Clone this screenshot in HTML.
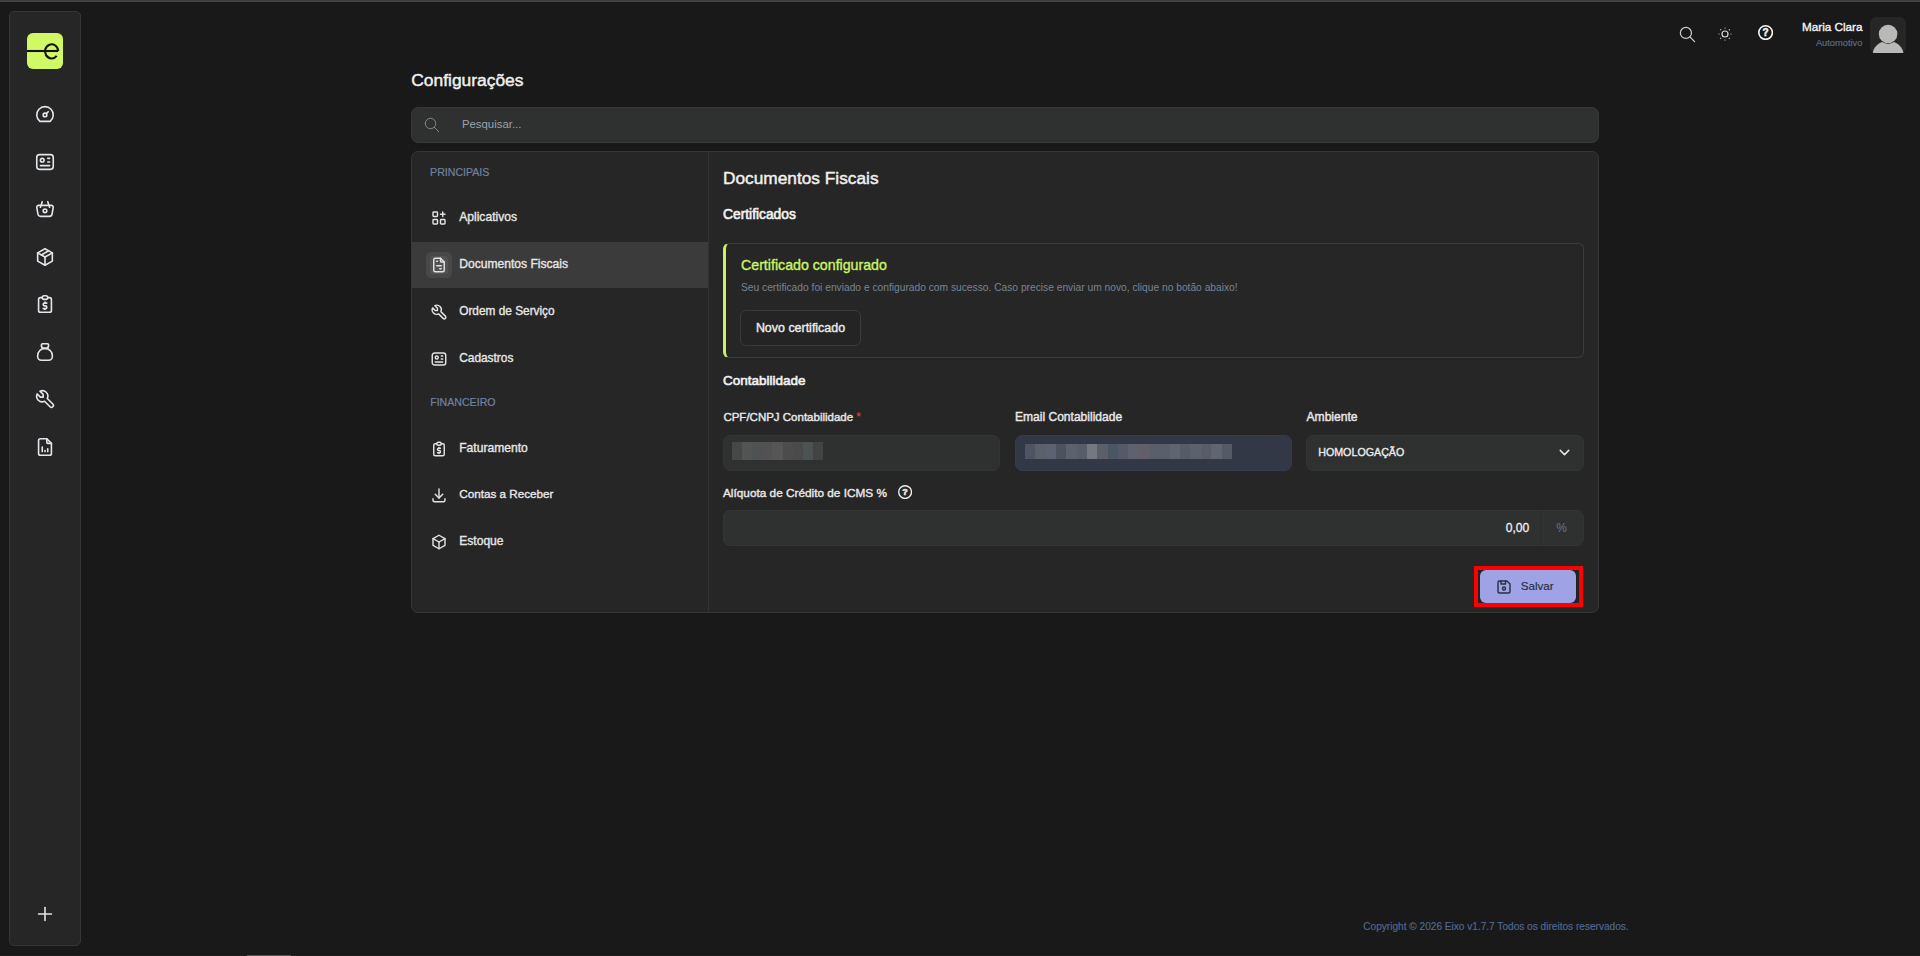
<!DOCTYPE html>
<html><head><meta charset="utf-8"><title>Configurações</title>
<style>
*{box-sizing:border-box;margin:0;padding:0}
html,body{width:1920px;height:956px;overflow:hidden;background:#191919;font-family:"Liberation Sans",sans-serif}
.t{position:absolute;white-space:nowrap}
.ic{position:absolute;display:block}
.r{position:absolute}
</style></head><body>
<div class="r" style="left:0;top:0;width:1920px;height:1px;background:#3d3d3d"></div><div class="r" style="left:0;top:1px;width:1920px;height:1px;background:#464746"></div><div class="r" style="left:0;top:2px;width:1920px;height:1px;background:#161616"></div><div class="r" style="left:0;top:955px;width:1920px;height:1px;background:#1f2022"></div><div class="r" style="left:247px;top:955px;width:44px;height:1px;background:#555"></div><div class="r" style="left:9px;top:11px;width:72px;height:935px;background:#262626;border:1px solid #363636;border-radius:5px"></div><div class="r" style="left:27px;top:33px;width:36px;height:36px;background:#d1f865;border-radius:6px"></div><svg class="ic" style="left:27px;top:33px;width:36px;height:36px" viewBox="0 0 36 36" fill="none" stroke="#141414" stroke-width="2.1"><path d="M0 18H31.2"/><path d="M29.7 22.9A6.6 7.1 0 1 1 31.2 18"/></svg><svg class="ic" style="left:34.00px;top:103.30px;width:22px;height:22px;" viewBox="0 0 24 24" fill="none" stroke="#e3e6ea" stroke-width="1.75" stroke-linecap="round" stroke-linejoin="round"><path d="M12 13m-2 0a2 2 0 1 0 4 0a2 2 0 1 0 -4 0"/><path d="M13.45 11.55l2.05 -2.05"/><path d="M6.4 20a9 9 0 1 1 11.2 0z"/></svg>
<svg class="ic" style="left:34.00px;top:150.80px;width:22px;height:22px;" viewBox="0 0 24 24" fill="none" stroke="#e3e6ea" stroke-width="1.75" stroke-linecap="round" stroke-linejoin="round"><path d="M3 7a3 3 0 0 1 3 -3h12a3 3 0 0 1 3 3v10a3 3 0 0 1 -3 3h-12a3 3 0 0 1 -3 -3z"/><path d="M9 10m-2 0a2 2 0 1 0 4 0a2 2 0 1 0 -4 0"/><path d="M15 8l2 0"/><path d="M15 12l2 0"/><path d="M7 16l10 0"/></svg>
<svg class="ic" style="left:34.00px;top:198.30px;width:22px;height:22px;" viewBox="0 0 24 24" fill="none" stroke="#e3e6ea" stroke-width="1.75" stroke-linecap="round" stroke-linejoin="round"><path d="M10 14a2 2 0 1 0 4 0a2 2 0 0 0 -4 0"/><path d="M5.001 8h13.999a2 2 0 0 1 1.977 2.304l-1.255 7.152a3 3 0 0 1 -2.966 2.544h-9.512a3 3 0 0 1 -2.965 -2.544l-1.255 -7.152a2 2 0 0 1 1.977 -2.304z"/><path d="M17 10l-2 -6"/><path d="M7 10l2 -6"/></svg>
<svg class="ic" style="left:34.00px;top:245.80px;width:22px;height:22px;" viewBox="0 0 24 24" fill="none" stroke="#e3e6ea" stroke-width="1.75" stroke-linecap="round" stroke-linejoin="round"><path d="M12 3l8 4.5l0 9l-8 4.5l-8 -4.5l0 -9l8 -4.5"/><path d="M12 12l8 -4.5"/><path d="M12 12l0 9"/><path d="M12 12l-8 -4.5"/><path d="M16 5.25l-8 4.5"/></svg>
<svg class="ic" style="left:34.00px;top:293.30px;width:22px;height:22px;" viewBox="0 0 24 24" fill="none" stroke="#e3e6ea" stroke-width="1.75" stroke-linecap="round" stroke-linejoin="round"><path d="M9 5h-2a2 2 0 0 0 -2 2v12a2 2 0 0 0 2 2h10a2 2 0 0 0 2 -2v-12a2 2 0 0 0 -2 -2h-2"/><path d="M9 5a2 2 0 0 1 2 -2h2a2 2 0 0 1 2 2a2 2 0 0 1 -2 2h-2a2 2 0 0 1 -2 -2z"/><path d="M14 11h-2.5a1.5 1.5 0 0 0 0 3h1a1.5 1.5 0 0 1 0 3h-2.5"/><path d="M12 17v1m0 -8v1"/></svg>
<svg class="ic" style="left:34.00px;top:340.80px;width:22px;height:22px;" viewBox="0 0 24 24" fill="none" stroke="#e3e6ea" stroke-width="1.75" stroke-linecap="round" stroke-linejoin="round"><path d="M9.5 3h5a1.5 1.5 0 0 1 1.5 1.5a3.5 3.5 0 0 1 -3.5 3.5h-1a3.5 3.5 0 0 1 -3.5 -3.5a1.5 1.5 0 0 1 1.5 -1.5z"/><path d="M4 17v-1a8 8 0 1 1 16 0v1a4 4 0 0 1 -4 4h-8a4 4 0 0 1 -4 -4z"/></svg>
<svg class="ic" style="left:34.00px;top:388.30px;width:22px;height:22px;" viewBox="0 0 24 24" fill="none" stroke="#e3e6ea" stroke-width="1.75" stroke-linecap="round" stroke-linejoin="round"><path d="M7 10h3v-3l-3.5 -3.5a6 6 0 0 1 8 8l6 6a2 2 0 0 1 -3 3l-6 -6a6 6 0 0 1 -8 -8l3.5 3.5"/></svg>
<svg class="ic" style="left:34.00px;top:435.80px;width:22px;height:22px;" viewBox="0 0 24 24" fill="none" stroke="#e3e6ea" stroke-width="1.75" stroke-linecap="round" stroke-linejoin="round"><path d="M14 3v4a1 1 0 0 0 1 1h4"/><path d="M17 21h-10a2 2 0 0 1 -2 -2v-14a2 2 0 0 1 2 -2h7l5 5v11a2 2 0 0 1 -2 2z"/><path d="M9 17l0 -5"/><path d="M12 17l0 -1"/><path d="M15 17l0 -3"/></svg>
<svg class="ic" style="left:34.00px;top:902.70px;width:22px;height:22px;" viewBox="0 0 24 24" fill="none" stroke="#e3e6ea" stroke-width="1.75" stroke-linecap="round" stroke-linejoin="round"><path d="M12 5l0 14"/><path d="M5 12l14 0"/></svg>
<svg class="ic" style="left:1677.50px;top:24.60px;width:19px;height:19px;" viewBox="0 0 24 24" fill="none" stroke="#d0d0d0" stroke-width="1.5" stroke-linecap="round" stroke-linejoin="round"><path d="M10 10m-7 0a7 7 0 1 0 14 0a7 7 0 1 0 -14 0"/><path d="M21 21l-6 -6"/></svg>
<svg class="ic" style="left:1716.00px;top:24.70px;width:18px;height:18px;" viewBox="0 0 24 24" fill="none" stroke="#d8d8d8" stroke-width="1.6" stroke-linecap="round" stroke-linejoin="round"><path d="M12 12m-4 0a4 4 0 1 0 8 0a4 4 0 1 0 -8 0"/><path d="M4 12h.01"/><path d="M12 4v.01"/><path d="M20 12h.01"/><path d="M12 20v.01"/><path d="M6.31 6.31l-.01 -.01"/><path d="M17.71 6.31l-.01 .01"/><path d="M17.7 17.7l.01 .01"/><path d="M6.3 17.7l.01 -.01"/></svg>
<svg class="ic" style="left:1758.00px;top:25.20px;width:15.2px;height:15.2px" viewBox="0 0 15.2 15.2"><circle cx="7.6" cy="7.6" r="6.80" fill="none" stroke="#f4f4f4" stroke-width="1.6"/><text x="7.6" y="11.20" text-anchor="middle" font-family="Liberation Sans" font-weight="bold" font-size="10" fill="#f4f4f4" stroke="#f4f4f4" stroke-width="0.5">?</text></svg>
<div class="t" style="right:57.60px;top:21.00px;font-size:11.7px;line-height:11.7px;color:#f4f4f4;font-weight:400;-webkit-text-stroke:0.35px #f4f4f4;">Maria Clara</div>
<div class="t" style="right:57.60px;top:39.00px;font-size:9.3px;line-height:9.3px;color:#5f6d88;font-weight:400;-webkit-text-stroke:0.15px #5f6d88;">Automotivo</div>
<div class="r" style="left:1870px;top:17px;width:36px;height:36px;background:#262626;border-radius:6px"></div><svg class="ic" style="left:1870px;top:17px;width:36px;height:36px" viewBox="0 0 36 36"><path fill="#b9b9b7" d="M2.8 35.2C4.5 28.5 10.5 24 18 24C25.5 24 31.5 28.5 33.4 35.2Q33.6 36 32.5 36H3.7Q2.6 36 2.8 35.2Z"/><circle cx="18.1" cy="17" r="9.9" fill="#262626"/><circle cx="18.1" cy="17" r="9.3" fill="#b9b9b7"/></svg><div class="t" style="left:411.30px;top:72.00px;font-size:17.4px;line-height:17.4px;color:#f0f0f0;font-weight:400;-webkit-text-stroke:0.45px #f0f0f0;">Configurações</div>
<div class="r" style="left:411px;top:107px;width:1188px;height:36px;background:#2f3030;border:1px solid #363737;border-radius:7px"></div><svg class="ic" style="left:423.40px;top:116.35px;width:18px;height:18px;" viewBox="0 0 24 24" fill="none" stroke="#7f8792" stroke-width="1.33" stroke-linecap="round" stroke-linejoin="round"><path d="M10 10m-7 0a7 7 0 1 0 14 0a7 7 0 1 0 -14 0"/><path d="M21 21l-6 -6"/></svg>
<div class="t" style="left:461.90px;top:119.00px;font-size:11.4px;line-height:11.4px;color:#9aa3ae;font-weight:400;">Pesquisar...</div>
<div class="r" style="left:411px;top:151px;width:1188px;height:462px;background:#262626;border:1px solid #363636;border-radius:7px;overflow:hidden"><div class="r" style="left:0;top:90px;width:296px;height:46px;background:#3b3b3b"></div><div class="r" style="left:296px;top:0;width:1px;height:462px;background:#333"></div></div><div class="t" style="left:430.10px;top:167.00px;font-size:10.6px;line-height:10.6px;color:#7082a2;font-weight:400;-webkit-text-stroke:0.2px #7082a2;">PRINCIPAIS</div>
<div class="t" style="left:430.20px;top:397.00px;font-size:10.6px;line-height:10.6px;color:#7082a2;font-weight:400;-webkit-text-stroke:0.2px #7082a2;">FINANCEIRO</div>
<div class="r" style="left:426px;top:252px;width:26px;height:26px;background:#484848;border-radius:5px"></div><div class="r" style="left:430px;top:256px;width:18px;height:18px;background:#525252;border-radius:3px"></div><svg class="ic" style="left:430.00px;top:209.00px;width:18px;height:18px;" viewBox="0 0 24 24" fill="none" stroke="#e3e3e3" stroke-width="1.9" stroke-linecap="round" stroke-linejoin="round"><path d="M4 5a1 1 0 0 1 1 -1h4a1 1 0 0 1 1 1v4a1 1 0 0 1 -1 1h-4a1 1 0 0 1 -1 -1z"/><path d="M4 15a1 1 0 0 1 1 -1h4a1 1 0 0 1 1 1v4a1 1 0 0 1 -1 1h-4a1 1 0 0 1 -1 -1z"/><path d="M14 15a1 1 0 0 1 1 -1h4a1 1 0 0 1 1 1v4a1 1 0 0 1 -1 1h-4a1 1 0 0 1 -1 -1z"/><path d="M14 7l6 0"/><path d="M17 4l0 6"/></svg>
<div class="t" style="left:459.20px;top:211.00px;font-size:12.1px;line-height:12.1px;color:#e6e6e6;font-weight:400;-webkit-text-stroke:0.35px #e6e6e6;">Aplicativos</div>
<svg class="ic" style="left:430.00px;top:256.00px;width:18px;height:18px;" viewBox="0 0 24 24" fill="none" stroke="#e3e3e3" stroke-width="1.9" stroke-linecap="round" stroke-linejoin="round"><path d="M14 3v4a1 1 0 0 0 1 1h4"/><path d="M17 21h-10a2 2 0 0 1 -2 -2v-14a2 2 0 0 1 2 -2h7l5 5v11a2 2 0 0 1 -2 2z"/><path d="M9 7l1 0"/><path d="M9 13l6 0"/><path d="M13 17l2 0"/></svg>
<div class="t" style="left:459.20px;top:258.00px;font-size:12.1px;line-height:12.1px;color:#e6e6e6;font-weight:400;-webkit-text-stroke:0.35px #e6e6e6;">Documentos Fiscais</div>
<svg class="ic" style="left:430.00px;top:303.00px;width:18px;height:18px;" viewBox="0 0 24 24" fill="none" stroke="#e3e3e3" stroke-width="1.9" stroke-linecap="round" stroke-linejoin="round"><path d="M7 10h3v-3l-3.5 -3.5a6 6 0 0 1 8 8l6 6a2 2 0 0 1 -3 3l-6 -6a6 6 0 0 1 -8 -8l3.5 3.5"/></svg>
<div class="t" style="left:459.20px;top:306.00px;font-size:11.85px;line-height:11.85px;color:#e6e6e6;font-weight:400;-webkit-text-stroke:0.35px #e6e6e6;">Ordem de Serviço</div>
<svg class="ic" style="left:430.00px;top:350.00px;width:18px;height:18px;" viewBox="0 0 24 24" fill="none" stroke="#e3e3e3" stroke-width="1.9" stroke-linecap="round" stroke-linejoin="round"><path d="M3 7a3 3 0 0 1 3 -3h12a3 3 0 0 1 3 3v10a3 3 0 0 1 -3 3h-12a3 3 0 0 1 -3 -3z"/><path d="M9 10m-2 0a2 2 0 1 0 4 0a2 2 0 1 0 -4 0"/><path d="M15 8l2 0"/><path d="M15 12l2 0"/><path d="M7 16l10 0"/></svg>
<div class="t" style="left:459.20px;top:353.00px;font-size:11.9px;line-height:11.9px;color:#e6e6e6;font-weight:400;-webkit-text-stroke:0.35px #e6e6e6;">Cadastros</div>
<svg class="ic" style="left:430.00px;top:440.00px;width:18px;height:18px;" viewBox="0 0 24 24" fill="none" stroke="#e3e3e3" stroke-width="1.9" stroke-linecap="round" stroke-linejoin="round"><path d="M9 5h-2a2 2 0 0 0 -2 2v12a2 2 0 0 0 2 2h10a2 2 0 0 0 2 -2v-12a2 2 0 0 0 -2 -2h-2"/><path d="M9 5a2 2 0 0 1 2 -2h2a2 2 0 0 1 2 2a2 2 0 0 1 -2 2h-2a2 2 0 0 1 -2 -2z"/><path d="M14 11h-2.5a1.5 1.5 0 0 0 0 3h1a1.5 1.5 0 0 1 0 3h-2.5"/><path d="M12 17v1m0 -8v1"/></svg>
<div class="t" style="left:459.20px;top:442.00px;font-size:12.1px;line-height:12.1px;color:#e6e6e6;font-weight:400;-webkit-text-stroke:0.35px #e6e6e6;">Faturamento</div>
<svg class="ic" style="left:430.00px;top:486.00px;width:18px;height:18px;" viewBox="0 0 24 24" fill="none" stroke="#e3e3e3" stroke-width="1.9" stroke-linecap="round" stroke-linejoin="round"><path d="M4 17v2a2 2 0 0 0 2 2h12a2 2 0 0 0 2 -2v-2"/><path d="M7 11l5 5l5 -5"/><path d="M12 4l0 12"/></svg>
<div class="t" style="left:459.20px;top:488.00px;font-size:11.7px;line-height:11.7px;color:#e6e6e6;font-weight:400;-webkit-text-stroke:0.35px #e6e6e6;">Contas a Receber</div>
<svg class="ic" style="left:430.00px;top:532.70px;width:18px;height:18px;" viewBox="0 0 24 24" fill="none" stroke="#e3e3e3" stroke-width="1.9" stroke-linecap="round" stroke-linejoin="round"><path d="M12 3l8 4.5l0 9l-8 4.5l-8 -4.5l0 -9l8 -4.5"/><path d="M12 12l8 -4.5"/><path d="M12 12l0 9"/><path d="M12 12l-8 -4.5"/></svg>
<div class="t" style="left:459.20px;top:535.00px;font-size:12.1px;line-height:12.1px;color:#e6e6e6;font-weight:400;-webkit-text-stroke:0.35px #e6e6e6;">Estoque</div>
<div class="t" style="left:723.00px;top:170.00px;font-size:17.3px;line-height:17.3px;color:#f0f0f0;font-weight:400;-webkit-text-stroke:0.45px #f0f0f0;">Documentos Fiscais</div>
<div class="t" style="left:723.00px;top:208.00px;font-size:13.8px;line-height:13.8px;color:#f2f2f2;font-weight:400;-webkit-text-stroke:0.6px #f2f2f2;">Certificados</div>
<div class="r" style="left:723px;top:243px;width:861px;height:115px;border:1px solid #3c3c3c;border-left:3px solid #c9f263;border-radius:6px"></div><div class="t" style="left:741.00px;top:258.00px;font-size:14.2px;line-height:14.2px;color:#c9f566;font-weight:400;-webkit-text-stroke:0.35px #c9f566;">Certificado configurado</div>
<div class="t" style="left:741.00px;top:283.00px;font-size:10.24px;line-height:10.24px;color:#7a8394;font-weight:400;">Seu certificado foi enviado e configurado com sucesso. Caso precise enviar um novo, clique no botão abaixo!</div>
<div class="r" style="left:740px;top:310px;width:121px;height:36px;border:1px solid #3a3a3a;border-radius:6px;background:#242424"></div><div class="t" style="left:755.90px;top:322.00px;font-size:12.45px;line-height:12.45px;color:#ececec;font-weight:400;-webkit-text-stroke:0.4px #ececec;">Novo certificado</div>
<div class="t" style="left:723.00px;top:374.00px;font-size:13.5px;line-height:13.5px;color:#f2f2f2;font-weight:400;-webkit-text-stroke:0.6px #f2f2f2;">Contabilidade</div>
<div class="t" style="left:723.40px;top:412.00px;font-size:11.5px;line-height:11.5px;color:#e8e8e8;font-weight:400;-webkit-text-stroke:0.4px #e8e8e8;">CPF/CNPJ Contabilidade</div>
<div class="t" style="left:856.20px;top:411.00px;font-size:12px;line-height:12px;color:#e5484d;font-weight:400;">*</div>
<div class="t" style="left:1015.00px;top:411.00px;font-size:12.05px;line-height:12.05px;color:#e8e8e8;font-weight:400;-webkit-text-stroke:0.4px #e8e8e8;">Email Contabilidade</div>
<div class="t" style="left:1306.50px;top:411.00px;font-size:12.1px;line-height:12.1px;color:#e8e8e8;font-weight:400;-webkit-text-stroke:0.4px #e8e8e8;">Ambiente</div>
<div class="r" style="left:723px;top:435px;width:277px;height:36px;background:#2f3030;border:1px solid #333434;border-radius:7px"></div><div class="r" style="left:1015px;top:435px;width:277px;height:36px;background:#323846;border:1px solid #353b48;border-radius:7px"></div><div class="r" style="left:1306px;top:435px;width:278px;height:36px;background:#2f3030;border:1px solid #333434;border-radius:7px"></div><div class="r" style="left:732.2px;top:442.3px;width:9.8px;height:17.5px;background:#464747"></div><div class="r" style="left:742.0px;top:442.3px;width:9.8px;height:17.5px;background:#525353"></div><div class="r" style="left:751.8px;top:442.3px;width:10.1px;height:17.5px;background:#4f5252"></div><div class="r" style="left:761.9px;top:442.3px;width:10.0px;height:17.5px;background:#525252"></div><div class="r" style="left:771.9px;top:442.3px;width:11.1px;height:17.5px;background:#565656"></div><div class="r" style="left:783.0px;top:442.3px;width:10.0px;height:17.5px;background:#4c4c4d"></div><div class="r" style="left:793.0px;top:442.3px;width:10.0px;height:17.5px;background:#4a4a4a"></div><div class="r" style="left:803.0px;top:442.3px;width:10.0px;height:17.5px;background:#4d5252"></div><div class="r" style="left:813.0px;top:442.3px;width:10.0px;height:17.5px;background:#434343"></div><div class="r" style="left:1024.9px;top:443.9px;width:10.5px;height:15.1px;background:#4e5562"></div><div class="r" style="left:1035.2px;top:443.9px;width:10.5px;height:15.1px;background:#5a616b"></div><div class="r" style="left:1045.6px;top:443.9px;width:10.5px;height:15.1px;background:#5c6370"></div><div class="r" style="left:1055.9px;top:443.9px;width:10.5px;height:15.1px;background:#4b535e"></div><div class="r" style="left:1066.3px;top:443.9px;width:10.5px;height:15.1px;background:#5b626e"></div><div class="r" style="left:1076.6px;top:443.9px;width:10.5px;height:15.1px;background:#575d69"></div><div class="r" style="left:1087.0px;top:443.9px;width:10.5px;height:15.1px;background:#737883"></div><div class="r" style="left:1097.3px;top:443.9px;width:10.5px;height:15.1px;background:#5a5f6a"></div><div class="r" style="left:1107.7px;top:443.9px;width:10.5px;height:15.1px;background:#4a5664"></div><div class="r" style="left:1118.0px;top:443.9px;width:10.5px;height:15.1px;background:#545a67"></div><div class="r" style="left:1128.3px;top:443.9px;width:10.5px;height:15.1px;background:#5d626e"></div><div class="r" style="left:1138.7px;top:443.9px;width:10.5px;height:15.1px;background:#625f6a"></div><div class="r" style="left:1149.0px;top:443.9px;width:10.5px;height:15.1px;background:#5a606b"></div><div class="r" style="left:1159.4px;top:443.9px;width:10.5px;height:15.1px;background:#595f6b"></div><div class="r" style="left:1169.7px;top:443.9px;width:10.5px;height:15.1px;background:#5e6470"></div><div class="r" style="left:1180.1px;top:443.9px;width:10.5px;height:15.1px;background:#555b67"></div><div class="r" style="left:1190.4px;top:443.9px;width:10.5px;height:15.1px;background:#5c626d"></div><div class="r" style="left:1200.8px;top:443.9px;width:10.5px;height:15.1px;background:#575c68"></div><div class="r" style="left:1211.1px;top:443.9px;width:10.5px;height:15.1px;background:#5f6571"></div><div class="r" style="left:1221.5px;top:443.9px;width:10.5px;height:15.1px;background:#545a66"></div><div class="t" style="left:1318.20px;top:447.00px;font-size:10.7px;line-height:10.7px;color:#ececec;font-weight:400;-webkit-text-stroke:0.35px #ececec;">HOMOLOGAÇÃO</div>
<svg class="ic" style="left:1555.50px;top:444.00px;width:17px;height:17px;" viewBox="0 0 24 24" fill="none" stroke="#e6e6e6" stroke-width="2.0" stroke-linecap="round" stroke-linejoin="round"><path d="M6 9l6 6l6 -6"/></svg>
<div class="t" style="left:723.00px;top:488.00px;font-size:11.8px;line-height:11.8px;color:#e8e8e8;font-weight:400;-webkit-text-stroke:0.4px #e8e8e8;">Alíquota de Crédito de ICMS %</div>
<svg class="ic" style="left:897.50px;top:484.80px;width:14.2px;height:14.2px" viewBox="0 0 14.2 14.2"><circle cx="7.1" cy="7.1" r="6.40" fill="none" stroke="#ececec" stroke-width="1.4"/><text x="7.1" y="10.34" text-anchor="middle" font-family="Liberation Sans" font-weight="bold" font-size="9" fill="#ececec" stroke="#ececec" stroke-width="0.5">?</text></svg>
<div class="r" style="left:723px;top:510px;width:861px;height:36px;background:#2f3030;border:1px solid #333434;border-radius:7px"></div><div class="r" style="left:1540px;top:511px;width:1px;height:34px;background:#2a2b2b"></div><div class="t" style="right:390.80px;top:522.00px;font-size:12.1px;line-height:12.1px;color:#ededed;font-weight:400;-webkit-text-stroke:0.3px #ededed;">0,00</div>
<div class="t" style="left:1556.20px;top:522.00px;font-size:12px;line-height:12px;color:#6a7488;font-weight:400;">%</div>
<div class="r" style="left:1474px;top:566px;width:109px;height:41px;border:4px solid #ff0000;background:#1e2424"></div><div class="r" style="left:1480px;top:570px;width:96px;height:33px;background:#a0a2e6;border-radius:6px"></div><svg class="ic" style="left:1494.90px;top:577.60px;width:18px;height:18px;" viewBox="0 0 24 24" fill="none" stroke="#293040" stroke-width="1.9" stroke-linecap="round" stroke-linejoin="round"><path d="M6 4h10l4 4v10a2 2 0 0 1 -2 2h-12a2 2 0 0 1 -2 -2v-12a2 2 0 0 1 2 -2"/><path d="M12 14m-2 0a2 2 0 1 0 4 0a2 2 0 1 0 -4 0"/><path d="M14 4l0 4l-6 0l0 -4"/></svg>
<div class="t" style="left:1520.80px;top:580.00px;font-size:11.6px;line-height:11.6px;color:#262c3c;font-weight:400;-webkit-text-stroke:0.15px #262c3c;">Salvar</div>
<div class="t" style="left:1363.30px;top:922.00px;font-size:10.1px;line-height:10.1px;color:#506a92;font-weight:400;-webkit-text-stroke:0.15px #506a92;">Copyright © 2026 Eixo v1.7.7 Todos os direitos reservados.</div>
</body></html>
